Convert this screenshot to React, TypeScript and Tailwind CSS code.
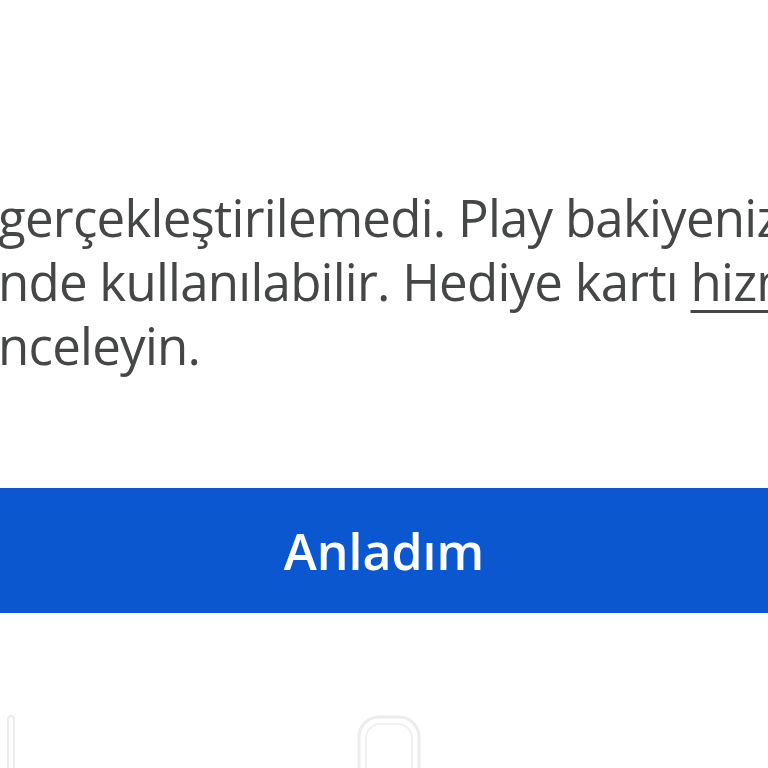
export default function App() {
  return (
    <div className="relative w-[768px] h-[768px] overflow-hidden bg-white" style={{ fontFamily: '"Open Sans", "Noto Sans", sans-serif' }}>
      <div className="pt-[185px] text-[51px] leading-[64px] text-[#444746] whitespace-nowrap tracking-[-0.75px]">
        <div className="-ml-[2px]">gerçekleştirilemedi. Play bakiyeniz</div>
        <div className="-ml-[2px]">
          nde kullanılabilir. Hediye kartı{" "}
          <span className="underline decoration-[3px] underline-offset-[9px]">hizmet</span>
        </div>
        <div className="-ml-[2px]">nceleyin.</div>
      </div>

      <div className="mt-[111px] h-[125px] bg-[#0b57d0] flex items-center justify-center">
        <span className="text-white text-[50px] font-semibold tracking-[0px] pt-[2px]">Anladım</span>
      </div>

      {/* nav bar icons, barely visible */}
      <div className="absolute left-0 right-0 top-[714px] h-[60px]">
        <svg className="absolute left-[4px] top-0" width="14" height="60" viewBox="0 0 14 60" fill="none">
          <rect x="4" y="2" width="6" height="70" rx="3" stroke="#ececec" strokeWidth="2" />
        </svg>
        <svg className="absolute left-[356px] top-0" width="66" height="60" viewBox="0 0 66 60" fill="none">
          <rect x="3" y="3" width="60" height="80" rx="20" stroke="#ececec" strokeWidth="3" />
          <rect x="10" y="10" width="46" height="70" rx="14" stroke="#f1f1f1" strokeWidth="2" />
        </svg>
      </div>
    </div>
  );
}
